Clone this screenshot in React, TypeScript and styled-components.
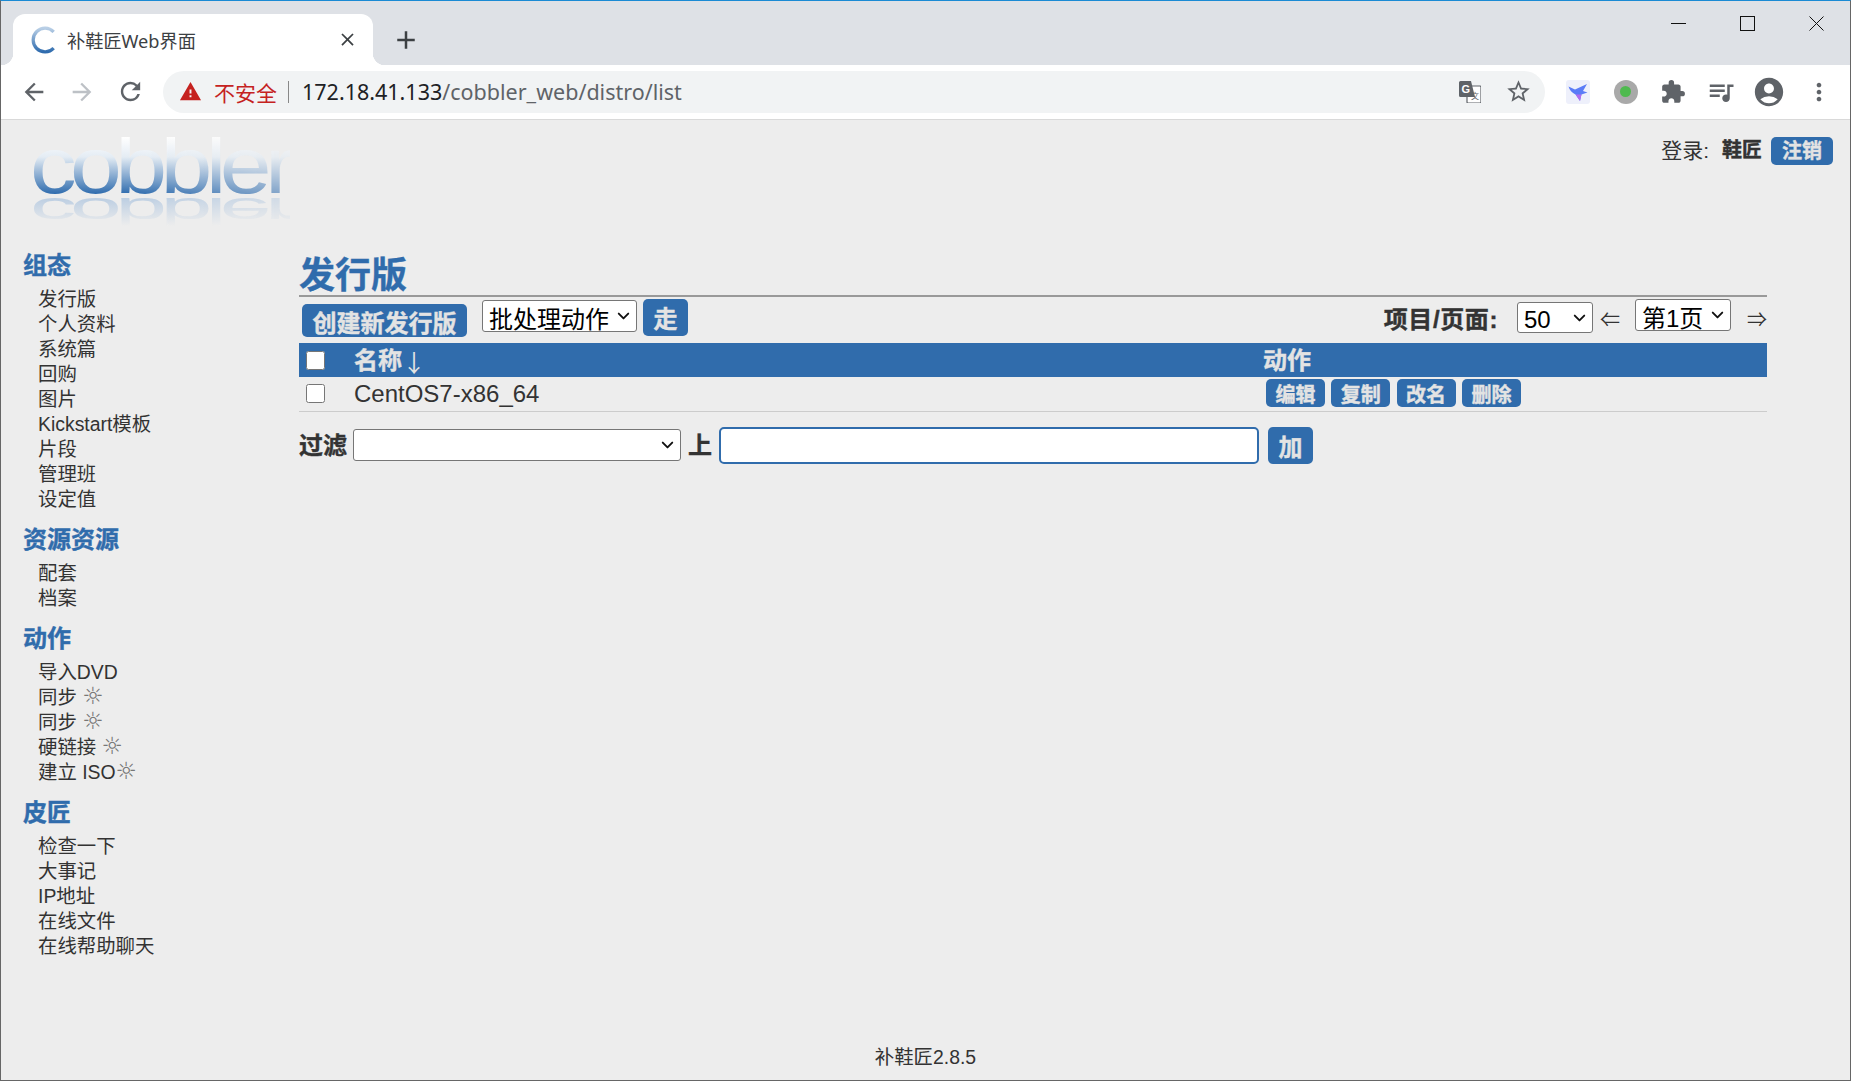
import React from 'react';
import styled, { createGlobalStyle, css } from 'styled-components';
import {
  MdAccountCircle,
  MdAdd,
  MdArrowBack,
  MdArrowForward,
  MdClose,
  MdExtension,
  MdMoreVert,
  MdQueueMusic,
  MdRefresh,
  MdStarBorder,
  MdWarning,
} from 'react-icons/md';
import { ChevronDown } from 'lucide-react';

const BLUE = '#306cac';
const PAGE_FONT = '"Liberation Sans", "Noto Sans CJK SC", sans-serif';
const CHROME_FONT = '"Noto Sans", "Noto Sans CJK SC", sans-serif';

const sidebar = [
  { title: '组态', items: [['发行版'], ['个人资料'], ['系统篇'], ['回购'], ['图片'], ['Kickstart模板'], ['片段'], ['管理班'], ['设定值']] },
  { title: '资源资源', items: [['配套'], ['档案']] },
  { title: '动作', items: [['导入DVD'], ['同步 ', '☼'], ['同步 ', '☼'], ['硬链接 ', '☼'], ['建立 ISO', '☼']] },
  { title: '皮匠', items: [['检查一下'], ['大事记'], ['IP地址'], ['在线文件'], ['在线帮助聊天']] },
];

const GlobalStyle = createGlobalStyle`
  html, body {
    margin: 0;
    height: 100%;
    overflow: hidden;
    background: #ededed;
  }
  * {
    box-sizing: border-box;
  }
`;

const heavy = css`
  font-weight: 700;
  -webkit-text-stroke: 0.4px currentColor;
`;

function CobblerLogo() {
  return (
    <svg width="258" height="90" viewBox="0 0 258 90">
      <defs>
        <linearGradient id="logoFill" gradientUnits="userSpaceOnUse" x1="0" y1="-56" x2="0" y2="1">
          <stop offset="0" stopColor="#ffffff" />
          <stop offset="0.35" stopColor="#e4ecf4" />
          <stop offset="1" stopColor="#2f6cae" />
        </linearGradient>
        <linearGradient id="logoShadow" gradientUnits="userSpaceOnUse" x1="0" y1="0" x2="0" y2="-56">
          <stop offset="0" stopColor="#bccee2" />
          <stop offset="1" stopColor="#ededed" />
        </linearGradient>
        <linearGradient id="logoFade" gradientUnits="userSpaceOnUse" x1="0" y1="0" x2="258" y2="0">
          <stop offset="0" stopColor="#fff" />
          <stop offset="0.4" stopColor="#fff" />
          <stop offset="1" stopColor="#888" />
        </linearGradient>
        <mask id="logoMask" maskUnits="userSpaceOnUse" x="0" y="0" width="258" height="90">
          <rect width="258" height="90" fill="url(#logoFade)" />
        </mask>
        <text id="logoWord" fontFamily="Liberation Sans, sans-serif" fontSize="79" letterSpacing="-5.600">
          cobbler
        </text>
      </defs>
      <g mask="url(#logoMask)">
        <use href="#logoWord" transform="translate(-2,56) scale(1.18,1)" fill="url(#logoFill)" />
        <use href="#logoWord" transform="translate(-2,61) scale(1.18,-0.5)" fill="url(#logoShadow)" />
      </g>
    </svg>
  );
}

function TranslateIcon() {
  return (
    <svg width="22" height="22" viewBox="0 0 22 22">
      <rect x="8" y="5" width="14" height="17" rx="1" fill="#fff" stroke="#5f6368" strokeWidth="1.2" />
      <path d="M1.500 0H12l4 16H1.500A1.500 1.500 0 0 1 0 14.500V1.500A1.500 1.500 0 0 1 1.500 0Z" fill="#5f6368" />
      <text x="2.500" y="12" fontFamily="Liberation Sans, sans-serif" fontWeight="700" fontSize="11" fill="#fff">G</text>
      <text x="12" y="18" fontFamily="Noto Sans CJK SC, sans-serif" fontSize="8" fill="#5f6368">文</text>
    </svg>
  );
}

function BirdIcon() {
  return (
    <svg width="24" height="24" viewBox="0 0 24 24">
      <rect width="24" height="24" rx="3" fill="#eef0fb" />
      <path d="M2.500 6.500 9 9.500 21 4 17 11 21.500 12.500 15.500 14.500 14 21 9.500 14.500C6 13 3.500 10 2.500 6.500Z" fill="#5b7cf7" />
      <path d="M9.500 14.500 14 21 15.500 14.500Z" fill="#b26cf0" />
    </svg>
  );
}

function MinimizeIcon() {
  return (
    <svg width="15" height="15" viewBox="0 0 15 15">
      <path d="M0 7.500H15" stroke="#111" strokeWidth="1" fill="none" />
    </svg>
  );
}

function MaximizeIcon() {
  return (
    <svg width="15" height="15" viewBox="0 0 15 15">
      <rect x="0.500" y="0.500" width="14" height="14" stroke="#111" strokeWidth="1" fill="none" />
    </svg>
  );
}

function CloseIcon() {
  return (
    <svg width="15" height="15" viewBox="0 0 15 15">
      <path d="M0.500 0.500 14.500 14.500M14.500 0.500 0.500 14.500" stroke="#111" strokeWidth="1" fill="none" />
    </svg>
  );
}

function Dropdown({ label, width, height, top = 0, left = 0, textTop = 5 }: any) {
  return (
    <DropdownBox $width={width} $height={height} $top={top} $left={left}>
      <DropdownField $textTop={textTop} defaultValue={label}>
        <option value={label}>{label}</option>
      </DropdownField>
      <DropdownArrow>
        <ChevronDown size={19} strokeWidth={2.400} color="#111" />
      </DropdownArrow>
    </DropdownBox>
  );
}

export default function App() {
  return (
    <Window>
      <GlobalStyle />
      <TabStrip>
        <Tab>
          <Favicon viewBox="0 0 24 26">
            <path d="M21 5.500A11 11 0 1 0 21 20.500" stroke="url(#faviconFill)" strokeWidth="3" fill="none" />
            <defs>
              <linearGradient id="faviconFill" x1="0" y1="0" x2="0" y2="1">
                <stop offset="0" stopColor="#b9cfe6" />
                <stop offset="1" stopColor="#2f6cae" />
              </linearGradient>
            </defs>
          </Favicon>
          <TabTitle>补鞋匠Web界面</TabTitle>
          <MdClose size={21} color="#3c4043" />
        </Tab>
        <NewTab>
          <MdAdd size={30} color="#3c4043" />
        </NewTab>
        <WindowControls>
          <MinimizeIcon />
          <MaximizeIcon />
          <CloseIcon />
        </WindowControls>
      </TabStrip>
      <Toolbar>
        <NavIcons>
          <MdArrowBack size={28} color="#5f6368" />
          <MdArrowForward size={28} color="#bdc1c6" />
          <MdRefresh size={29} color="#5f6368" />
        </NavIcons>
        <Omnibox>
          <MdWarning size={23} color="#c5221f" />
          <Insecure>不安全</Insecure>
          <Divider />
          <Url>
            172.18.41.133<UrlPath>/cobbler_web/distro/list</UrlPath>
          </Url>
          <OmniboxIcons>
            <TranslateIcon />
            <MdStarBorder size={27} color="#5f6368" />
          </OmniboxIcons>
        </Omnibox>
        <Extensions>
          <BirdIcon />
          <GreenDot />
          <MdExtension size={26} color="#5f6368" />
          <MdQueueMusic size={30} color="#5f6368" />
          <MdAccountCircle size={34} color="#5f6368" />
          <MoreIcon size={28} color="#5f6368" />
        </Extensions>
      </Toolbar>
      <Page>
        <PageHeader>
          <CobblerLogo />
          <Login>
            <LoginLabel>登录:</LoginLabel>
            <LoginName>鞋匠</LoginName>
            <LogoutButton>注销</LogoutButton>
          </Login>
        </PageHeader>
        <Body>
          <Sidebar>
            {sidebar.map((section) => (
              <SideSection key={section.title}>
                <SideTitle>{section.title}</SideTitle>
                {section.items.map((item, idx) => (
                  <SideItem key={idx}>
                    {item[0]}
                    {item[1] && <Sun>{item[1]}</Sun>}
                  </SideItem>
                ))}
              </SideSection>
            ))}
          </Sidebar>
          <Main>
            <Title>发行版</Title>
            <ActionBar>
              <ActionGroup>
                <CreateButton>创建新发行版</CreateButton>
                <Dropdown label="批处理动作" width={155} height={32} top={1} left={15} />
                <GoButton>走</GoButton>
              </ActionGroup>
              <ActionGroup>
                <PerPageLabel>项目/页面:</PerPageLabel>
                <Dropdown label="50" width={76} height={31} top={3} left={19} textTop={3} />
                <PageArrow>⇐</PageArrow>
                <Dropdown label="第1页" width={96} height={32} />
                <NextArrow>⇒</NextArrow>
              </ActionGroup>
            </ActionBar>
            <DistroTable>
              <colgroup>
                <col style={{ width: 55 }} />
                <col style={{ width: 909 }} />
                <col />
              </colgroup>
              <thead>
                <tr>
                  <HeadCell>
                    <RowCheck type="checkbox" />
                  </HeadCell>
                  <HeadCell>
                    名称<SortArrow>↓</SortArrow>
                  </HeadCell>
                  <HeadCell>动作</HeadCell>
                </tr>
              </thead>
              <tbody>
                <tr>
                  <BodyCell>
                    <RowCheck type="checkbox" />
                  </BodyCell>
                  <BodyCell>CentOS7-x86_64</BodyCell>
                  <BodyCell>
                    <RowActions>
                      <RowButton>编辑</RowButton>
                      <RowButton>复制</RowButton>
                      <RowButton>改名</RowButton>
                      <RowButton>删除</RowButton>
                    </RowActions>
                  </BodyCell>
                </tr>
              </tbody>
            </DistroTable>
            <FilterRow>
              <FilterLabel>过滤</FilterLabel>
              <Dropdown label="" width={328} height={32} left={6} />
              <FilterGap />
              <FilterLabel>上</FilterLabel>
              <FilterInput type="text" />
              <AddButton>加</AddButton>
            </FilterRow>
          </Main>
        </Body>
        <Footer>补鞋匠2.8.5</Footer>
      </Page>
    </Window>
  );
}

const Window = styled.div`
  height: 100vh;
  display: flex;
  flex-direction: column;
  border-top: 1px solid #1a8ad4;
  border-left: 1px solid #666;
  border-right: 1px solid #666;
  border-bottom: 1px solid #666;
  font-family: ${PAGE_FONT};
  overflow: hidden;
`;
const TabStrip = styled.div`
  height: 64px;
  flex: none;
  display: flex;
  align-items: flex-end;
  background: #dee1e6;
  padding-left: 12px;
`;
const Tab = styled.div`
  position: relative;
  width: 360px;
  height: 51px;
  display: flex;
  align-items: center;
  padding: 0 15px 0 18px;
  background: #fff;
  border-radius: 12px 12px 0 0;
  font-family: ${CHROME_FONT};

  &::before,
  &::after {
    content: '';
    position: absolute;
    bottom: 0;
    width: 12px;
    height: 12px;
  }
  &::before {
    left: -12px;
    background: radial-gradient(circle at 0 0, transparent 12px, #fff 12.500px);
  }
  &::after {
    right: -12px;
    background: radial-gradient(circle at 100% 0, transparent 12px, #fff 12.500px);
  }
`;
const Favicon = styled.svg`
  width: 26px;
  height: 28px;
  flex: none;
`;
const TabTitle = styled.span`
  flex: 1;
  margin-left: 10px;
  font-size: 18.200px;
  color: #3c4043;
`;
const NewTab = styled.div`
  display: flex;
  align-items: center;
  height: 51px;
  margin-left: 18px;
`;
const WindowControls = styled.div`
  margin-left: auto;
  align-self: flex-start;
  display: flex;
  gap: 54px;
  padding: 15px 26px 0 0;
`;
const Toolbar = styled.div`
  height: 55px;
  flex: none;
  display: flex;
  align-items: center;
  background: #fff;
  border-bottom: 1px solid #d9d9d9;
  padding-bottom: 1px;
`;
const NavIcons = styled.div`
  display: flex;
  align-items: center;
  gap: 20px;
  width: 162px;
  padding-left: 19px;
`;
const Omnibox = styled.div`
  flex: none;
  width: 1382px;
  height: 42px;
  display: flex;
  align-items: center;
  padding: 0 13px 0 16px;
  background: #f1f3f4;
  border-radius: 21px;
  font-family: ${CHROME_FONT};
`;
const Insecure = styled.span`
  margin-left: 12px;
  font-size: 21px;
  color: #c5221f;
`;
const Divider = styled.span`
  width: 1px;
  height: 22px;
  margin: 0 13px 0 11px;
  background: #888;
`;
const Url = styled.span`
  flex: 1;
  font-size: 21.500px;
  color: #202124;
`;
const UrlPath = styled.span`
  color: #5f6368;
`;
const OmniboxIcons = styled.div`
  display: flex;
  align-items: center;
  gap: 24px;
`;
const Extensions = styled.div`
  display: grid;
  grid-template-columns: repeat(6, 47.700px);
  justify-items: center;
  align-items: center;
  margin-left: 9px;
`;
const MoreIcon = styled(MdMoreVert)`
  margin-left: 5px;
`;
const GreenDot = styled.span`
  width: 24px;
  height: 24px;
  border-radius: 50%;
  background: #a9a9a9;
  display: flex;
  align-items: center;
  justify-content: center;

  &::after {
    content: '';
    width: 11px;
    height: 11px;
    border-radius: 50%;
    background: #4fba4f;
  }
`;
const Page = styled.div`
  flex: 1;
  min-height: 0;
  display: flex;
  flex-direction: column;
  background: #ededed;
  color: #333;
`;
const PageHeader = styled.div`
  height: 132px;
  flex: none;
  display: flex;
  justify-content: space-between;
  align-items: flex-start;
  padding: 17px 17px 0 31px;
`;
const Login = styled.div`
  display: flex;
  align-items: center;
  height: 28px;
`;
const LoginLabel = styled.span`
  margin-bottom: 5px;
  font-size: 21px;
`;
const LoginName = styled.b`
  ${heavy}
  margin: 0 0 5px 13px;
  font-size: 20px;
`;
const LogoutButton = styled.span`
  ${heavy}
  margin-left: 9px;
  padding: 0 11px;
  height: 28px;
  line-height: 28px;
  border-radius: 5px;
  background: ${BLUE};
  color: #e3e3e3;
  font-size: 20px;
`;
const Body = styled.div`
  flex: 1;
  min-height: 0;
  display: flex;
`;
const Sidebar = styled.nav`
  width: 298px;
  flex: none;
  padding-left: 22px;
`;
const SideSection = styled.section`
  margin-bottom: 14px;
`;
const SideTitle = styled.h2`
  ${heavy}
  margin: 0 0 7px;
  font-size: 24px;
  line-height: 28px;
  color: ${BLUE};
`;
const SideItem = styled.div`
  padding-left: 15px;
  font-size: 19.400px;
  line-height: 25px;
  height: 25px;
  color: #333;
`;
const Sun = styled.span`
  font: 24px/0 "DejaVu Sans", sans-serif;
  color: #777;
`;
const Main = styled.main`
  width: 1468px;
  flex: none;
  padding-top: 5px;
`;
const Title = styled.h1`
  ${heavy}
  margin: 0;
  font-size: 36px;
  line-height: 38px;
  color: ${BLUE};
  border-bottom: 2px solid #999;
`;
const ActionBar = styled.div`
  height: 46px;
  display: flex;
  justify-content: space-between;
  padding-top: 2px;
`;
const ActionGroup = styled.div`
  display: flex;
  align-items: flex-start;
`;
const BlueButton = styled.button`
  ${heavy}
  padding: 0;
  border: 0;
  border-radius: 5px;
  background: ${BLUE};
  color: #e3e3e3;
  font-family: ${PAGE_FONT};
  font-size: 24px;
`;
const CreateButton = styled(BlueButton)`
  margin: 5px 0 0 3px;
  width: 165px;
  height: 33px;
`;
const GoButton = styled(BlueButton)`
  margin-left: 6px;
  width: 45px;
  height: 37px;
`;
const DropdownBox = styled.div<{ $width: number; $height: number; $top: number; $left: number }>`
  position: relative;
  flex: none;
  width: ${(p) => p.$width}px;
  height: ${(p) => p.$height}px;
  margin: ${(p) => p.$top}px 0 0 ${(p) => p.$left}px;
`;
const DropdownField = styled.select<{ $textTop: number }>`
  display: block;
  width: 100%;
  height: 100%;
  padding: ${(p) => p.$textTop}px 24px 0 6px;
  appearance: none;
  border: 1px solid #767676;
  border-radius: 3px;
  background: #fff;
  color: #000;
  font: 24px ${PAGE_FONT};
`;
const DropdownArrow = styled.span`
  position: absolute;
  top: 50%;
  right: 4px;
  height: 19px;
  transform: translateY(-50%);
  pointer-events: none;
`;
const PerPageLabel = styled.b`
  ${heavy}
  margin-top: 7px;
  font-size: 24px;
  line-height: 28px;
  letter-spacing: 0.600px;
`;
const PageArrow = styled.span`
  margin: 6px 15px 0 7px;
  font: 20px/28px "Noto Sans CJK SC", "DejaVu Sans", sans-serif;
`;
const NextArrow = styled.span`
  margin: 6px 0 0 16px;
  font: 20px/28px "Noto Sans CJK SC", "DejaVu Sans", sans-serif;
`;
const DistroTable = styled.table`
  width: 100%;
  table-layout: fixed;
  border-collapse: collapse;
`;
const HeadCell = styled.th`
  ${heavy}
  height: 34px;
  padding: 1px 0 0;
  text-align: left;
  background: ${BLUE};
  color: #e3e3e3;
  font-size: 24px;
  line-height: 28px;
`;
const BodyCell = styled.td`
  height: 34px;
  padding: 0;
  border-bottom: 1px solid #ccc;
  font-size: 24px;
  line-height: 28px;
  color: #333;
`;
const RowCheck = styled.input`
  display: block;
  width: 19px;
  height: 19px;
  margin: 0 0 0 7px;
`;
const SortArrow = styled.span`
  position: relative;
  top: 3px;
  font: 400 24px/1 "Noto Sans CJK SC", sans-serif;
  -webkit-text-stroke: 0;
`;
const RowActions = styled.div`
  display: flex;
  gap: 6.300px;
  margin: -2px 0 0 3px;
`;
const RowButton = styled(BlueButton)`
  width: 59px;
  height: 28px;
  font-size: 20px;
`;
const FilterRow = styled.div`
  display: flex;
  align-items: center;
  margin-top: 15px;
`;
const FilterLabel = styled.b`
  ${heavy}
  margin-top: 2px;
  font-size: 24px;
  line-height: 28px;
`;
const FilterGap = styled.span`
  width: 7px;
`;
const FilterInput = styled.input`
  width: 540px;
  height: 37px;
  margin: 0 9px 0 7px;
  border: 2px solid ${BLUE};
  border-radius: 5px;
  background: #fff;
  font: 20px ${PAGE_FONT};
  outline: none;
`;
const AddButton = styled(BlueButton)`
  width: 45px;
  height: 37px;
`;
const Footer = styled.footer`
  height: 36px;
  flex: none;
  text-align: center;
  font-size: 19.400px;
  line-height: 26px;
  color: #333;
`;
